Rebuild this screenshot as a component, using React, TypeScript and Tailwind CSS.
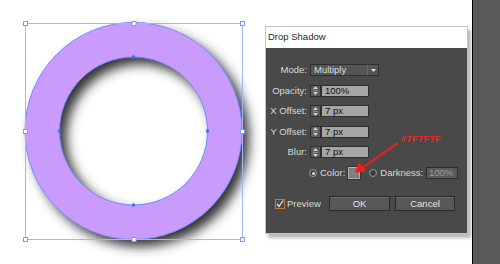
import React from "react";

const Stepper = () => (
  <div className="w-[11px] h-full bg-[#5b5b5b] border border-[#2f2f2f] flex flex-col items-center justify-center gap-[1px]">
    <svg width="5" height="3" viewBox="0 0 5 3"><path d="M0 3L2.5 0L5 3Z" fill="#d0d0d0" /></svg>
    <div className="w-[5px] h-px bg-[#8a8a8a]" />
    <svg width="5" height="3" viewBox="0 0 5 3"><path d="M0 0L2.5 3L5 0Z" fill="#d0d0d0" /></svg>
  </div>
);

const Field = ({ value, w = "w-[48px]" }: { value: string; w?: string }) => (
  <div className={`${w} h-full bg-[#a5a5a5] border border-[#2f2f2f] text-[#111] text-[9.5px] leading-none flex items-center pl-[3px] whitespace-nowrap`}>
    {value}
  </div>
);

const Row = ({ label, children }: { label: string; children: React.ReactNode }) => (
  <div className="flex items-center h-[12px]">
    <div className="w-[41px] text-right text-[9.5px] text-[#d8d8d8] leading-none whitespace-nowrap">{label}</div>
    <div className="ml-[3px] flex h-full">{children}</div>
  </div>
);

const Handle = ({ x, y }: { x: number; y: number }) => (
  <rect x={x - 2} y={y - 2} width="4" height="4" fill="#fff" stroke="#7c98ff" strokeWidth="1" />
);

const Anchor = ({ x, y }: { x: number; y: number }) => (
  <rect x={x - 1.5} y={y - 1.5} width="3" height="3" fill="#3d6bff" />
);

const Ring = () => {
  const cx = 133.5;
  const cy = 131;
  const R = 108.5;
  const r = 74;
  const d = `M${cx - R} ${cy}a${R} ${R} 0 1 0 ${2 * R} 0a${R} ${R} 0 1 0 ${-2 * R} 0Z M${cx - r} ${cy}a${r} ${r} 0 1 0 ${2 * r} 0a${r} ${r} 0 1 0 ${-2 * r} 0Z`;
  return (
    <svg width="265" height="264" viewBox="0 0 265 264">
      <defs>
        <filter id="ds" x="-20%" y="-20%" width="150%" height="150%">
          <feDropShadow dx="7" dy="7" stdDeviation="6" floodColor="#333" floodOpacity="1" />
        </filter>
      </defs>
      <path d={d} fillRule="evenodd" fill="#c99bfc" filter="url(#ds)" />
      <path d={d} fillRule="evenodd" fill="none" stroke="#6f8dff" strokeWidth="1" />
      <rect x="25.5" y="23.5" width="217" height="216" fill="none" stroke="#9fb5ff" strokeWidth="1" />
      <Handle x={25.5} y={23.5} />
      <Handle x={134} y={23.5} />
      <Handle x={242.5} y={23.5} />
      <Handle x={25.5} y={131.5} />
      <Handle x={242.5} y={131.5} />
      <Handle x={25.5} y={239.5} />
      <Handle x={134} y={239.5} />
      <Handle x={242.5} y={239.5} />
      <Anchor x={133.5} y={57} />
      <Anchor x={133.5} y={205} />
      <Anchor x={59.5} y={131} />
      <Anchor x={207.5} y={131} />
    </svg>
  );
};

const Radio = ({ on }: { on?: boolean }) => (
  <div className="w-[8px] h-[8px] shrink-0 rounded-full border border-[#9a9a9a] bg-[#3e3e3e] flex items-center justify-center">
    {on && <div className="w-[3px] h-[3px] rounded-full bg-[#e0e0e0]" />}
  </div>
);

const Button = ({ label, w }: { label: string; w: string }) => (
  <div className={`${w} h-[15px] bg-[#575757] border border-[#2a2a2a] shadow-[inset_0_1px_0_#6e6e6e] text-[9.5px] text-[#e4e4e4] leading-none flex items-center justify-center`}>
    {label}
  </div>
);

export default function App() {
  return (
    <div
      className="relative w-[500px] h-[264px] overflow-hidden bg-white flex"
      style={{ fontFamily: "'Liberation Sans', Arial, sans-serif" }}
    >
      {/* canvas */}
      <div className="w-[265px] shrink-0">
        <Ring />
      </div>

      {/* dialog */}
      <div className="mt-[26px] w-[203px] h-[208px] shrink-0 border border-[#c4c4c4] shadow-[3px_4px_3px_rgba(0,0,0,0.28)] flex flex-col">
        <div className="h-[21px] bg-white text-[9.5px] text-[#2a2a2a] flex items-center pl-[2px]">Drop Shadow</div>
        <div className="flex-1 bg-[#494949] flex flex-col pt-[16px]">
          <div className="flex flex-col gap-[8.5px]">
            <Row label="Mode:">
              <div className="w-[69px] h-[12px] bg-[#555] border border-[#2f2f2f] flex items-center">
                <div className="flex-1 text-[9.5px] text-[#dcdcdc] leading-none pl-[3px]">Multiply</div>
                <div className="w-px h-full bg-[#6c6c6c]" />
                <div className="w-[10px] flex justify-center">
                  <svg width="5" height="3" viewBox="0 0 5 3"><path d="M0 0L2.5 3L5 0Z" fill="#e0e0e0" /></svg>
                </div>
              </div>
            </Row>
            <Row label="Opacity:">
              <Stepper />
              <Field value="100%" />
            </Row>
            <Row label="X Offset:">
              <Stepper />
              <Field value="7 px" />
            </Row>
            <Row label="Y Offset:">
              <Stepper />
              <Field value="7 px" />
            </Row>
            <Row label="Blur:">
              <Stepper />
              <Field value="7 px" />
            </Row>
          </div>

          <div className="mt-[9px] h-[12px] flex items-center pl-[43px]">
            <Radio on />
            <span className="ml-[3px] text-[9.5px] text-[#d8d8d8] leading-none whitespace-nowrap">Color:</span>
            <div className="ml-[3px] w-[12px] h-[12px] shrink-0 bg-[#7f7f7f] border border-[#b0b0b0] shadow-[0_0_0_1px_#333]" />
            <div className="ml-[9px]"><Radio /></div>
            <span className="ml-[3px] text-[9.5px] text-[#d8d8d8] leading-none whitespace-nowrap">Darkness:</span>
            <div className="ml-[3px] w-[32px] h-[12px] shrink-0 bg-[#5a5a5a] border border-[#2f2f2f] text-[9.5px] text-[#9a9a9a] leading-none flex items-center pl-[2px]">100%</div>
          </div>

          <div className="mt-[17px] flex items-center">
            <div className="w-[63px] pl-[9px] flex items-center">
              <div className="w-[10px] h-[10px] border border-[#c87a2c] bg-[#4a4a4a] flex items-center justify-center">
                <svg width="8" height="8" viewBox="0 0 8 8"><path d="M1 4L3 6.5L7 0.5" fill="none" stroke="#e6e6e6" strokeWidth="1.3" /></svg>
              </div>
              <span className="ml-[2px] text-[9.5px] text-[#d8d8d8] leading-none">Preview</span>
            </div>
            <Button label="OK" w="w-[61px]" />
            <div className="ml-[5px]"><Button label="Cancel" w="w-[60px]" /></div>
          </div>
        </div>
      </div>

      {/* right edge */}
      <div className="w-[4px] shrink-0" />
      <div className="w-px bg-black shrink-0" />
      <div className="flex-1 bg-[#5a5a5a]" />

      {/* annotation */}
      <div className="absolute left-[401px] top-[135px] text-[9px] font-bold text-[#ff2020] leading-none tracking-[0.5px]">#7F7F7F</div>
      <svg className="absolute left-0 top-0" width="500" height="264" viewBox="0 0 500 264">
        <line x1="398" y1="143" x2="362" y2="168" stroke="#ff1a1a" strokeWidth="2" />
        <path d="M355 173L359 162L366 171Z" fill="#ff1a1a" />
      </svg>
    </div>
  );
}
